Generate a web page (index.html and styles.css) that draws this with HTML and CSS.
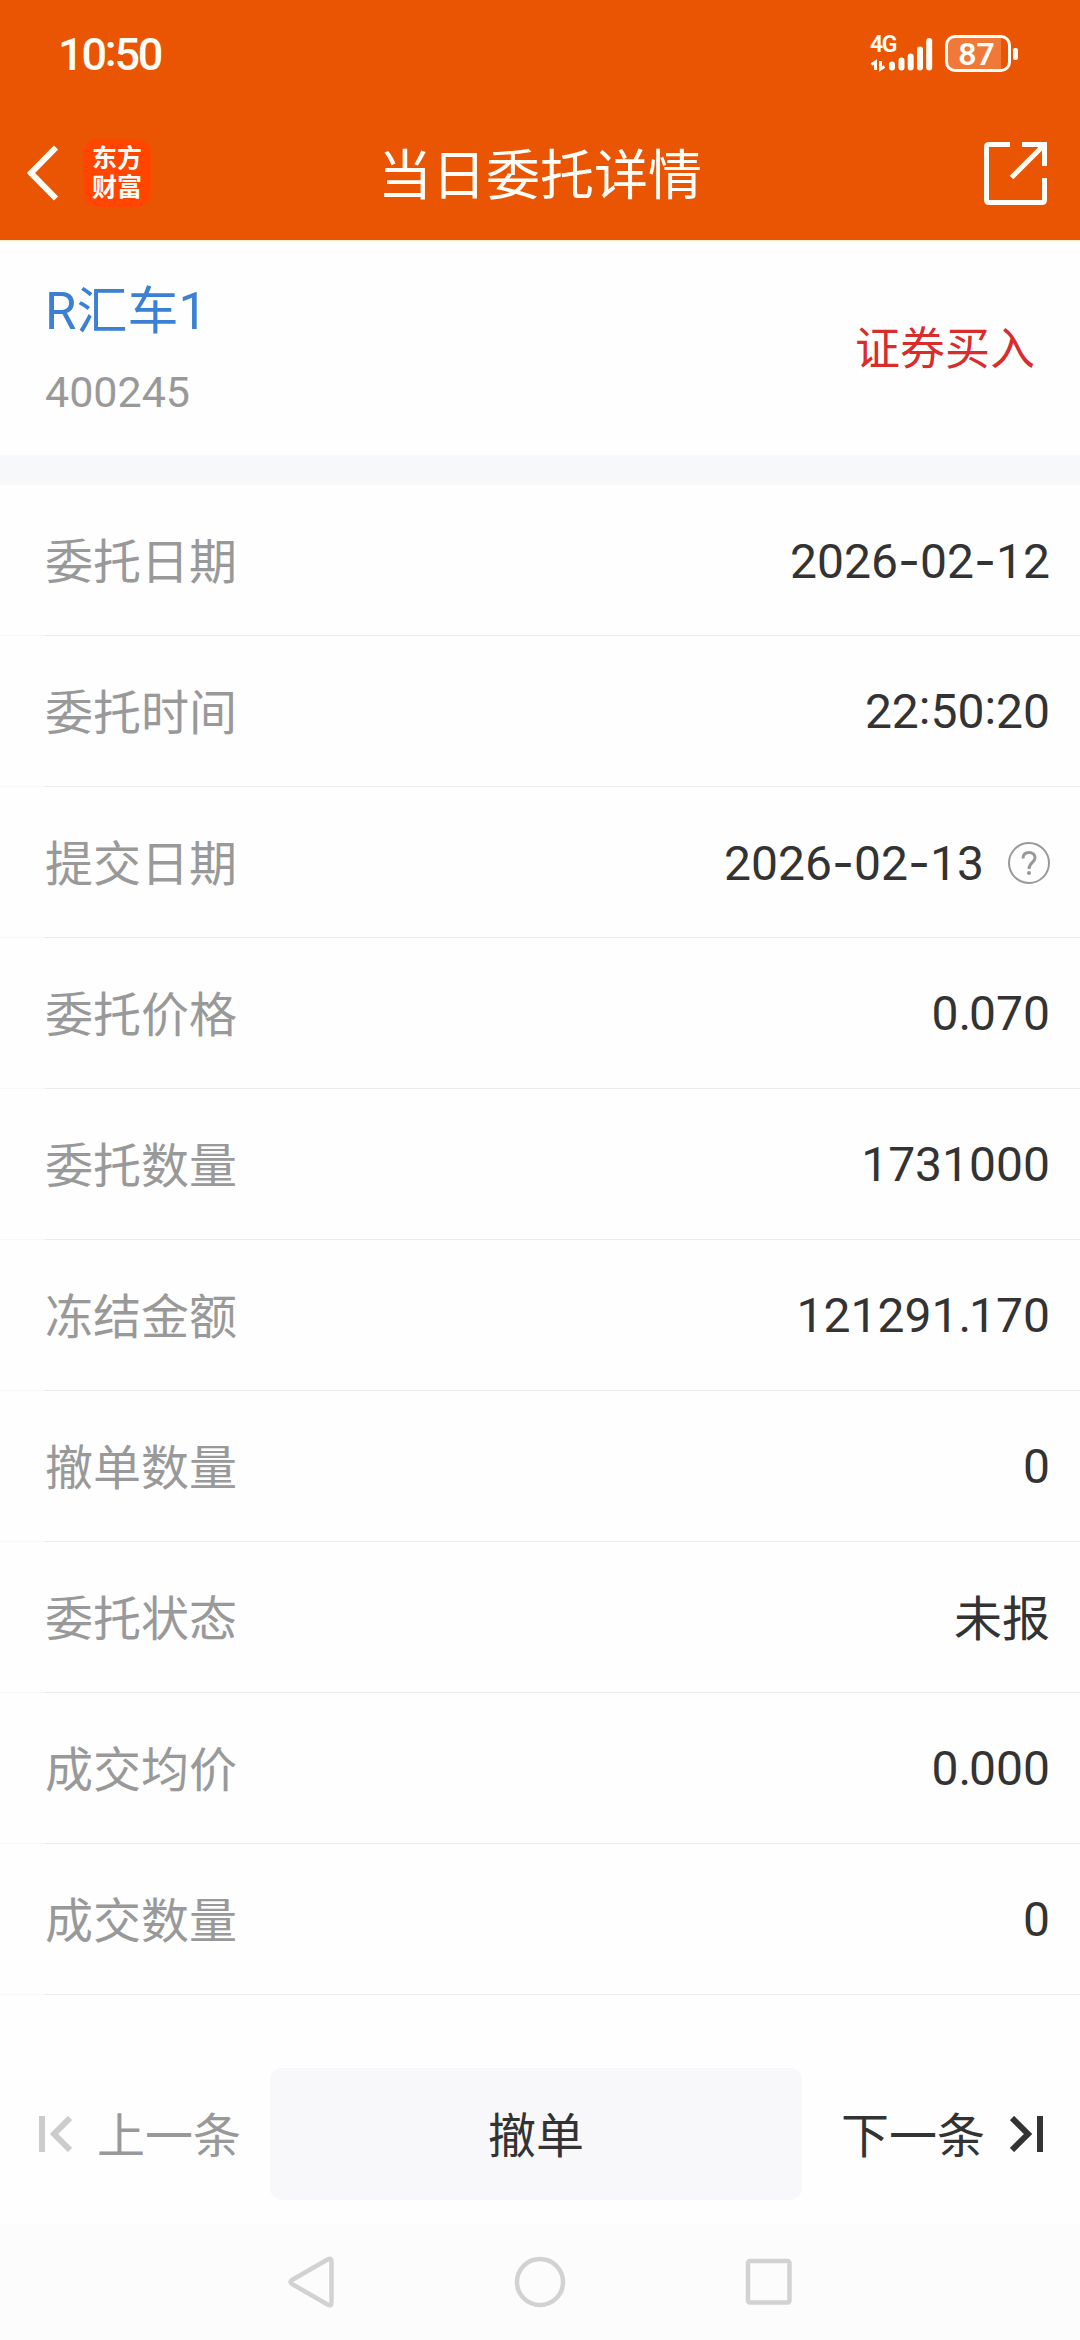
FILE: index.html
```html
<!DOCTYPE html>
<html lang="zh-CN">
<head>
  <meta charset="UTF-8" />
  <meta name="viewport" content="width=device-width, initial-scale=1.0"/>
  <title>当日委托详情</title>
  <link rel="stylesheet" href="styles.css">
</head>

<body>
  <header class="header">
    <div class="status-bar">
      <span class="time">10<span class="colon">:</span>50</span>
      <div class="status-icons">
        <div class="network">
          <span class="network-type">4G</span>
          <svg class="signal" width="64" height="36" viewBox="0 0 64 36">
            <path class="arrows" d="M5.5 34V26L1.5 28.5M10.5 25V33L14.5 30.5"/>
            <path class="bars" d="M22 28.5V31.5M31.5 24.5V31.5M40.7 20.5V31.5M50 13.5V31.5M59.2 5V31.5"/>
          </svg>
        </div>
        <div class="battery"><span class="battery-level">87</span></div>
        <span class="battery-tip"></span>
      </div>
    </div>
    <nav class="title-bar">
      <div class="title-left">
        <svg width="32" height="56" viewBox="0 0 32 56">
          <path d="M29 2.5L4 28L29 53.5" fill="none" stroke="#fffdf8" stroke-width="6"/>
        </svg>
        <div class="logo"><span>东方</span><span>财富</span></div>
      </div>
      <h1>当日委托详情</h1>
      <svg class="share" width="63" height="63" viewBox="0 0 63 63">
        <path d="M26 2.5H5Q2.5 2.5 2.5 5V58Q2.5 60.5 5 60.5H58Q60.5 60.5 60.5 58V36"/>
        <path d="M38 2.5H60.5V24M60 3L27.5 35.5"/>
      </svg>
    </nav>
  </header>

  <section class="stock">
    <div>
      <div class="stock-name">R汇车1</div>
      <div class="stock-code">400245</div>
    </div>
    <div class="direction">证券买入</div>
  </section>

  <main class="list">
    <div class="row"><label>委托日期</label><span class="value">2026<span class="dash">-</span>02<span class="dash">-</span>12</span></div>
    <div class="row"><label>委托时间</label><span class="value">22<span class="colon">:</span>50<span class="colon">:</span>20</span></div>
    <div class="row">
      <label>提交日期</label>
      <span class="value">2026<span class="dash">-</span>02<span class="dash">-</span>13</span>
      <svg class="help" width="42" height="42" viewBox="0 0 42 42">
        <circle cx="21" cy="21" r="20"/>
        <path d="M15 16.5C15 12.5 17.5 10.5 21 10.5C24.5 10.5 27 12.7 27 15.8C27 20.5 21 20.5 21 27"/>
        <circle class="dot" cx="21" cy="31" r="2"/>
      </svg>
    </div>
    <div class="row"><label>委托价格</label><span class="value">0<span class="point">.</span>070</span></div>
    <div class="row"><label>委托数量</label><span class="value">1731000</span></div>
    <div class="row"><label>冻结金额</label><span class="value">121291<span class="point">.</span>170</span></div>
    <div class="row"><label>撤单数量</label><span class="value">0</span></div>
    <div class="row"><label>委托状态</label><span class="value text">未报</span></div>
    <div class="row"><label>成交均价</label><span class="value">0<span class="point">.</span>000</span></div>
    <div class="row"><label>成交数量</label><span class="value">0</span></div>
  </main>

  <footer class="footer">
    <div class="prev">
      <svg width="33" height="36" viewBox="0 0 33 36">
        <path d="M3 0V36M31 2L15 18L31 34"/>
      </svg>
      <span class="text">上一条</span>
    </div>
    <button class="cancel-btn">撤单</button>
    <div class="next">
      <span class="text">下一条</span>
      <svg width="33" height="36" viewBox="0 0 33 36">
        <path d="M30 0V36M2 2L18 18L2 34"/>
      </svg>
    </div>
  </footer>

  <div class="system-nav">
    <svg width="54" height="54" viewBox="0 0 54 54"><path d="M43.500 4.500Q47.500 2.500 47.500 6V48Q47.500 51.500 43.500 49.500L8 29Q5 27 8 25Z"/></svg>
    <svg width="54" height="54" viewBox="0 0 54 54"><circle cx="27" cy="27" r="23"/></svg>
    <svg width="54" height="54" viewBox="0 0 54 54"><rect x="6" y="6" width="41.500" height="41.500" rx="2"/></svg>
  </div>
</body>
</html>
```

FILE: styles.css
```css
* {
  margin: 0;
  padding: 0;
  box-sizing: border-box;
}

body {
  background: #fefefe;
  color: #333;
  font-family: Roboto, 'Noto Sans CJK SC', sans-serif;
  width: 1080px;
  height: 2340px;
  overflow: hidden;
}

svg {
  display: block;
  flex: none;
}

.header {
  height: 241px;
  background: #ea5504;
  border-bottom: 1px solid #ffeccf;
  color: #fffdf8;
}

.status-bar {
  height: 107px;
  padding: 0 62px 0 58px;
  display: flex;
  align-items: center;
  justify-content: space-between;
}

.time {
  font-size: 45px;
  font-weight: 500;
  letter-spacing: -2.2px;
  padding-top: 2px;
}

.colon {
  position: relative;
  top: -4px;
}

.status-icons {
  display: flex;
  align-items: center;
}

.network {
  position: relative;
  width: 64px;
  height: 36px;
  margin-right: 11px;
}

.network-type {
  position: absolute;
  left: 0;
  top: 0;
  font-size: 23px;
  line-height: 18px;
  font-weight: 600;
  letter-spacing: -1.5px;
}

.signal path {
  fill: none;
  stroke: #fffdf8;
}

.signal .arrows {
  stroke-width: 3;
}

.signal .bars {
  stroke-width: 6;
  stroke-linecap: round;
}

.battery {
  width: 66px;
  height: 37px;
  border: 3px solid #fffdf8;
  border-radius: 10px;
  background: linear-gradient(to right, #f07838 88%, transparent 88%);
  display: flex;
  align-items: center;
  justify-content: center;
}

.battery-level {
  font-size: 32px;
  line-height: 32px;
  font-weight: 600;
  padding-right: 3px;
}

.battery-tip {
  width: 5px;
  height: 12px;
  margin-left: 2px;
  border-radius: 2px;
  background: #fffdf8;
}

.title-bar {
  height: 132px;
  padding: 0 33px 0 27px;
  display: grid;
  grid-template-columns: 1fr auto 1fr;
  align-items: center;
}

.title-left {
  display: flex;
  align-items: center;
  gap: 24px;
}

.logo {
  width: 68px;
  height: 68px;
  padding-bottom: 4px;
  border-radius: 15px;
  background: #ff4500;
  display: flex;
  flex-direction: column;
  align-items: center;
  justify-content: center;
  font-family: 'Noto Sans CJK SC', sans-serif;
  font-size: 25px;
  line-height: 29px;
  font-weight: 700;
}

.title-bar h1 {
  font-size: 54px;
  line-height: 80px;
  font-weight: 400;
  margin-left: 6px;
  padding-top: 7px;
}

.share {
  justify-self: end;
  fill: none;
  stroke: #fffdf8;
  stroke-width: 5;
}

.stock {
  height: 214px;
  padding: 0 45px;
  display: flex;
  justify-content: space-between;
  align-items: center;
}

.stock-name {
  font-size: 51px;
  line-height: 76px;
  color: #3c80d4;
}

.stock-code {
  font-size: 43px;
  line-height: 60px;
  margin-top: 12px;
  color: #999;
}

.direction {
  font-size: 45px;
  color: #d92c2c;
  padding-bottom: 5px;
}

.list {
  border-top: 30px solid #f7f8fa;
}

/* divider is fainter under the left gutter */
.row {
  height: 151px;
  padding: 0 30px 0 45px;
  display: flex;
  align-items: center;
  background: linear-gradient(to right, #f7f7f7 45px, #ebebeb 45px) bottom / 100% 1px no-repeat;
  font-size: 48px;
}

.row label {
  flex: 1;
  color: #999;
  padding-bottom: 6px;
}

.text {
  padding-bottom: 5px;
}

.dash {
  font-family: Inter, sans-serif;
}

.point {
  letter-spacing: -2px;
}

.help {
  margin-left: 24px;
  fill: none;
  stroke: #999;
  stroke-width: 2;
}

.help path {
  stroke-width: 3;
}

.help .dot {
  fill: #999;
  stroke: none;
}

.footer {
  height: 229px;
  padding-top: 73px;
  display: grid;
  grid-template-columns: 270px 532px 278px;
  font-size: 48px;
}

.prev, .next {
  height: 132px;
  display: flex;
  align-items: center;
  gap: 25px;
}

.prev {
  padding-left: 39px;
  color: #999;
}

.next {
  padding-left: 39px;
}

.footer path {
  fill: none;
  stroke: #333;
  stroke-width: 6;
}

.footer .prev path {
  stroke: #ccc;
}

.cancel-btn {
  height: 132px;
  padding-bottom: 5px;
  border: none;
  border-radius: 12px;
  background: #f8f8fa;
  color: #333;
  font-family: inherit;
  font-size: 48px;
}

.system-nav {
  height: 116px;
  padding-top: 31px;
  background: #fcfcfc;
  display: flex;
  justify-content: center;
  gap: 175px;
}

.system-nav svg {
  fill: none;
  stroke: #d2d2d2;
  stroke-width: 4.5;
}
```
